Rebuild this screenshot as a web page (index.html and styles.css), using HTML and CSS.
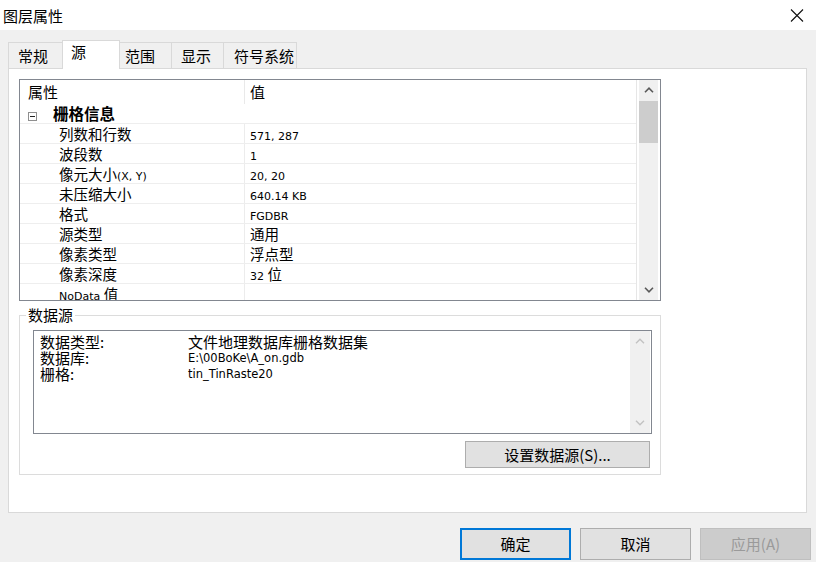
FILE: index.html
```html
<!DOCTYPE html>
<html lang="zh-CN">
<head>
<meta charset="utf-8">
<title>图层属性</title>
<link rel="stylesheet" href="styles.css">
</head>
<body>
<div class="dialog">
  <div class="titlebar">
    <span class="title">图层属性</span>
    <svg class="close" width="14" height="15" viewBox="0 0 14 15"><path d="M1 1.5L13 13.5M13 1.5L1 13.5" stroke="#111" stroke-width="1.1" fill="none"/></svg>
  </div>
  <div class="main">
    <div class="tabs">
      <div class="tab t1">常规</div>
      <div class="tab active t2">源</div>
      <div class="tab t3">范围</div>
      <div class="tab t4">显示</div>
      <div class="tab t5">符号系统</div>
    </div>
    <div class="panel">
      <div class="grid">
        <div class="table">
          <div class="row head"><div class="name">属性</div><div class="val">值</div></div>
          <div class="row cat"><div class="name"><span class="exp"></span><b>栅格信息</b></div><div class="val"></div></div>
          <div class="row"><div class="name">列数和行数</div><div class="val"><span class="lt">571, 287</span></div></div>
          <div class="row"><div class="name">波段数</div><div class="val"><span class="lt">1</span></div></div>
          <div class="row"><div class="name">像元大小<span class="lt">(X, Y)</span></div><div class="val"><span class="lt">20, 20</span></div></div>
          <div class="row"><div class="name">未压缩大小</div><div class="val"><span class="lt">640.14 KB</span></div></div>
          <div class="row"><div class="name">格式</div><div class="val"><span class="lt">FGDBR</span></div></div>
          <div class="row"><div class="name">源类型</div><div class="val">通用</div></div>
          <div class="row"><div class="name">像素类型</div><div class="val">浮点型</div></div>
          <div class="row"><div class="name">像素深度</div><div class="val"><span class="lt">32 </span>位</div></div>
          <div class="row"><div class="name"><span class="lt">NoData </span>值</div><div class="val"></div></div>
        </div>
        <div class="vscroll">
          <div class="sb-btn"><svg width="10" height="6" viewBox="0 0 10 6"><polyline points="1,5.2 5,1.2 9,5.2" fill="none" stroke="#5a5a5a" stroke-width="1.6"/></svg></div>
          <div class="thumb"></div>
          <div class="track"></div>
          <div class="sb-btn"><svg width="10" height="6" viewBox="0 0 10 6"><polyline points="1,0.8 5,4.8 9,0.8" fill="none" stroke="#5a5a5a" stroke-width="1.6"/></svg></div>
        </div>
      </div>
      <fieldset class="group">
        <legend>数据源</legend>
        <div class="textbox">
          <div class="lines">
            <div class="line"><span class="key">数据类型:</span><span class="v">文件地理数据库栅格数据集</span></div>
            <div class="line"><span class="key">数据库:</span><span class="v lt2">E:\00BoKe\A_on.gdb</span></div>
            <div class="line"><span class="key">栅格:</span><span class="v lt2">tin_TinRaste20</span></div>
          </div>
          <div class="vscroll off">
            <div class="sb-btn"><svg width="10" height="6" viewBox="0 0 10 6"><polyline points="1,5.2 5,1.2 9,5.2" fill="none" stroke="#c2c2c2" stroke-width="1.4"/></svg></div>
            <div class="track"></div>
            <div class="sb-btn"><svg width="10" height="6" viewBox="0 0 10 6"><polyline points="1,0.8 5,4.8 9,0.8" fill="none" stroke="#c2c2c2" stroke-width="1.4"/></svg></div>
          </div>
        </div>
        <div class="btnrow"><button class="btn setsrc">设置数据源(S)...</button></div>
      </fieldset>
    </div>
  </div>
  <div class="footer">
    <button class="btn foot default">确定</button>
    <button class="btn foot">取消</button>
    <button class="btn foot disabled">应用(A)</button>
  </div>
</div>
</body>
</html>
```

FILE: styles.css
```css
* { box-sizing: border-box; }

html, body {
  margin: 0;
  padding: 0;
}

body {
  width: 816px;
  height: 562px;
  overflow: hidden;
  background: #f0f0f0;
  font-family: "Noto Sans CJK SC", "Noto Sans", sans-serif;
  color: #000;
}

.dialog {
  width: 816px;
  height: 562px;
  display: flex;
  flex-direction: column;
}

.titlebar {
  height: 30px;
  background: #fff;
  display: flex;
  align-items: center;
  justify-content: space-between;
  padding: 0 12px 0 3px;
}

.title {
  font-size: 15px;
  line-height: 18px;
  margin-top: 1px;
}

.close {
  display: block;
}

.main {
  padding: 10px 0 0 8px;
}

.tabs {
  display: flex;
  align-items: flex-end;
  height: 28px;
}

.tab {
  height: 26px;
  font-size: 15px;
  line-height: 22px;
  padding-top: 2px;
  padding-left: 9px;
  background: #f0f0f0;
  border: 1px solid #d9d9d9;
  border-bottom: none;
  margin-left: -1px;
  white-space: nowrap;
}

.t1 { width: 55px; margin-left: 0; }
.t2 { width: 58px; padding-left: 8px; }
.t3 { width: 53px; padding-left: 5px; }
.t4 { width: 53px; }
.t5 { width: 74px; padding-left: 10px; }

.tab.active {
  height: 29px;
  background: #fff;
  padding-top: 0;
  margin-bottom: -1px;
  position: relative;
  z-index: 1;
}

.panel {
  width: 799px;
  height: 445px;
  background: #fff;
  border: 1px solid #d9d9d9;
  padding: 10px;
}

/* property grid */
.grid {
  width: 642px;
  height: 222px;
  border: 1px solid #828790;
  display: flex;
}

.table {
  width: 617px;
  overflow: hidden;
  border-right: 1px solid #e6e6e6;
}

.row {
  display: flex;
  height: 20px;
  border-bottom: 1px solid #eeeeee;
  font-size: 14.5px;
  line-height: 19px;
  white-space: nowrap;
}

.row .name {
  width: 224px;
  padding-left: 39px;
}

.row .val {
  flex: 1;
  border-left: 1px solid #ececec;
  padding-left: 5px;
}

.row.head {
  height: 24px;
  line-height: 23px;
  border-bottom: none;
  font-size: 15px;
}

.row.head .name { padding-left: 8px; }
.row.head .val { border-left-color: #e9e9e9; }

.row.cat .name { padding-left: 8px; }
.row.cat .val { border-left-color: #fff; }

.row.cat b {
  font-size: 15.5px;
  font-weight: 700;
}

.exp {
  display: inline-block;
  width: 9px;
  height: 9px;
  border: 1px solid #8f8f8f;
  margin-right: 16px;
  vertical-align: -1px;
  position: relative;
}

.exp::after {
  content: "";
  position: absolute;
  left: 1px;
  top: 3px;
  width: 5px;
  height: 1px;
  background: #222;
}

.lt {
  font-family: "DejaVu Sans", sans-serif;
  font-size: 11px;
  white-space: pre;
}

.lt2 {
  font-family: "DejaVu Sans", sans-serif;
  font-size: 11.5px;
}

.vscroll {
  width: 19px;
  margin: 0 2px;
  background: #f0f0f0;
  display: flex;
  flex-direction: column;
}

.sb-btn {
  height: 20px;
  display: flex;
  align-items: center;
  justify-content: center;
  flex: none;
}

.sb-btn svg { display: block; }

.thumb {
  height: 42px;
  margin-top: 1px;
  background: #cdcdcd;
  flex: none;
}

.track { flex: 1; }

/* data source group */
.group {
  width: 642px;
  margin: 6px 0 0 0;
  border: 1px solid #dcdcdc;
  padding: 0 8px 6px 13px;
  min-width: 0;
}

.group legend {
  font-size: 15px;
  line-height: 16px;
  padding: 0 2px;
  margin-left: -7px;
}

.textbox {
  margin-top: 7px;
  height: 104px;
  border: 1px solid #828790;
  display: flex;
}

.lines {
  flex: 1;
  padding: 3px 0 0 6px;
}

.line {
  height: 16px;
  line-height: 16px;
  font-size: 15px;
  white-space: nowrap;
}

.key {
  display: inline-block;
  width: 148px;
  vertical-align: top;
}

.v {
  display: inline-block;
  vertical-align: top;
}

.vscroll.off {
  width: 20px;
  margin: 0 1px 0 0;
}

.btnrow {
  display: flex;
  justify-content: flex-end;
  margin-top: 7px;
  padding-right: 2px;
}

.btn {
  font-family: "Noto Sans CJK SC", "Noto Sans", sans-serif;
  font-size: 15px;
  color: #000;
  background: #e1e1e1;
  border: 1px solid #adadad;
  padding: 0;
  margin: 0;
}

.setsrc {
  width: 185px;
  height: 27px;
  line-height: 22px;
}

.footer {
  display: flex;
  justify-content: flex-end;
  gap: 9px;
  padding: 15px 5px 0 0;
}

.foot {
  width: 111px;
  height: 32px;
  line-height: 26px;
}

.foot.default {
  border: 2px solid #0078d7;
}

.foot.disabled {
  background: #cccccc;
  border-color: #bfbfbf;
  color: #9a9a9a;
}
```
